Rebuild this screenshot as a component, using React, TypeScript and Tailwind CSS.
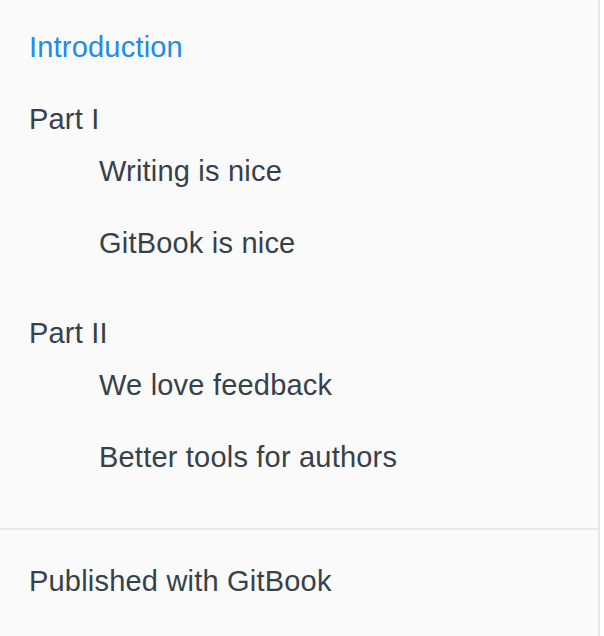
type Chapter = {
  title: string;
  articles: string[];
};

const parts: Chapter[] = [
  { title: "Part I", articles: ["Writing is nice", "GitBook is nice"] },
  { title: "Part II", articles: ["We love feedback", "Better tools for authors"] },
];

const font = { fontFamily: '"Liberation Sans", Arial, sans-serif' };

export default function App() {
  return (
    <div className="flex min-h-[636px] w-full bg-white" style={font}>
      <nav className="flex w-[600px] flex-col border-r-2 border-[#e8e8e8] bg-[#fafafa] text-[29px] leading-[32px] tracking-[0.2px] text-[#364149]">
        <ul className="pt-[11px]">
          <li className="py-5 pl-[29px] text-[#208ce8]">Introduction</li>
          {parts.map((part, i) => (
            <li key={part.title} className={i > 0 ? "mt-[18px]" : ""}>
              <div className="pl-[29px] pt-5">{part.title}</div>
              <ul className="pl-[70px]">
                {part.articles.map((a) => (
                  <li key={a} className="py-5 pl-[29px]">
                    {a}
                  </li>
                ))}
              </ul>
            </li>
          ))}
        </ul>
        <div className="mt-[35px] border-t-2 border-[#e8e8e8]" />
        <div className="flex-1 pl-[29px] pt-[35px]">Published with GitBook</div>
      </nav>
    </div>
  );
}
